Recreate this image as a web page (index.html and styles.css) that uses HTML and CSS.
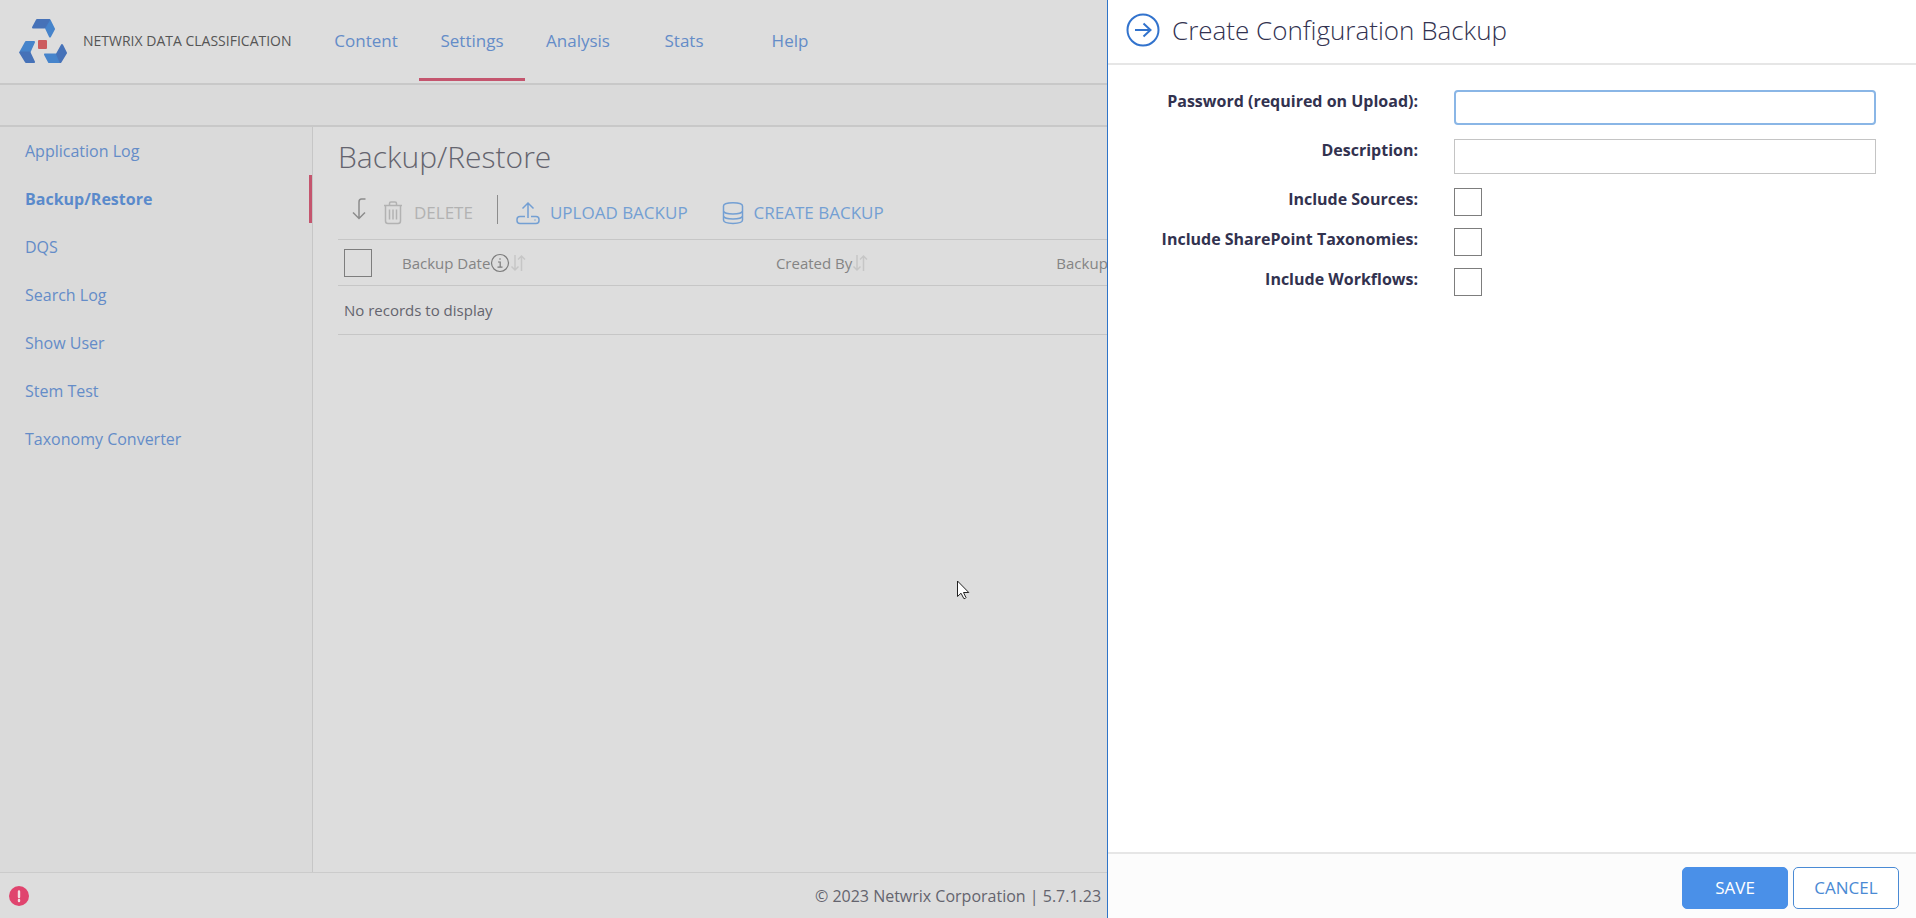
FILE: index.html
```html
<!DOCTYPE html>
<html lang="en">
<head>
<meta charset="utf-8">
<title>Netwrix Data Classification - Backup/Restore</title>
<link rel="stylesheet" href="styles.css">
</head>
<body>
<div class="app">
  <header class="topbar">
    <a class="brand" href="#">
      <svg class="brand-logo" viewBox="0 0 48 44" width="48" height="44" aria-hidden="true">
        <g stroke-linejoin="round" stroke-width="2">
          <path fill="#4684cb" stroke="#4684cb" d="M30.500 1L35 10l-4 7.500L26.500 8z"/>
          <path fill="#4672b8" stroke="#4672b8" d="M18 1h12l-4.500 7.500H14z"/>
          <path fill="#4684cb" stroke="#4684cb" d="M7 23h8l-4.500 10H1.500z"/>
          <path fill="#4672b8" stroke="#4672b8" d="M1.200 33.500h9.300L15 43H7z"/>
          <path fill="#4684cb" stroke="#4684cb" d="M26 35.500h11L41 43H30z"/>
          <path fill="#4672b8" stroke="#4672b8" d="M43 26l4 8-5.500 9-3.500-8z"/>
          <path fill="#cc5c5e" stroke="#cc5c5e" d="M20 22h7v7h-7z"/>
        </g>
      </svg>
      <span>NETWRIX DATA CLASSIFICATION</span>
    </a>
    <nav class="main-nav">
      <a href="#">Content</a>
      <a class="current" href="#">Settings</a>
      <a href="#">Analysis</a>
      <a href="#">Stats</a>
      <a href="#">Help</a>
    </nav>
  </header>
  <div class="subbar"></div>
  <div class="body">
    <nav class="sidebar">
      <a href="#">Application Log</a>
      <a class="current" href="#">Backup/Restore</a>
      <a href="#">DQS</a>
      <a href="#">Search Log</a>
      <a href="#">Show User</a>
      <a href="#">Stem Test</a>
      <a href="#">Taxonomy Converter</a>
    </nav>
    <main class="content">
      <h1>Backup/Restore</h1>
      <div class="toolbar">
        <svg class="apply-arrow" viewBox="0 0 14 22" width="14" height="22" aria-hidden="true"><path d="M13.500 1H9.500Q7 1 7 4v16M1 14.500l6 6 6-6"/></svg>
        <button class="tool" type="button" disabled>
          <svg viewBox="0 0 22 24" width="22" height="24" aria-hidden="true"><path d="M2 4.500h18M7.500 4V2.500q0-1.500 1.500-1.500h4q1.500 0 1.500 1.500V4M3.500 4.500V20q0 2.500 2.500 2.500h10q2.500 0 2.500-2.500V4.500M7.500 8.500v10M11 8.500v10M14.500 8.500v10"/></svg>
          <span>DELETE</span>
        </button>
        <span class="divider"></span>
        <button class="tool upload" type="button">
          <svg viewBox="0 0 24 24" width="24" height="24" aria-hidden="true"><path d="M12 17V2M6.500 7.500L12 2l5.500 5.500M9 15.500H4q-3 0-3 3v1q0 3 3 3h16q3 0 3-3v-1q0-3-3-3h-5M18.500 19h1"/></svg>
          <span>UPLOAD BACKUP</span>
        </button>
        <button class="tool" type="button">
          <svg viewBox="0 0 22 24" width="22" height="24" aria-hidden="true"><path d="M1.500 5c0-4.500 19-4.500 19 0v14c0 4.500-19 4.500-19 0zM1.500 10c1 4 18 4 19 0M1.500 15c1 4 18 4 19 0"/></svg>
          <span>CREATE BACKUP</span>
        </button>
      </div>
      <table class="grid">
        <colgroup><col class="col-pick"><col class="col-date"><col class="col-user"><col></colgroup>
        <thead>
          <tr>
            <th><input class="tick" type="checkbox" aria-label="Select all backups"></th>
            <th><span class="head">Backup Date
              <svg class="info" viewBox="0 0 20 20" width="20" height="20" aria-hidden="true"><circle cx="10" cy="10" r="8.500"/><path d="M8 9h2.200v5M7.500 14.200h5M10 5.200v1.600"/></svg>
              <svg class="sort" viewBox="0 0 16 18" width="16" height="18" aria-hidden="true"><path d="M5 1v15M1.500 12.500L5 16l3.500-3.500M11.500 17V2M8 5.500L11.500 2 15 5.500"/></svg></span></th>
            <th><span class="head">Created By
              <svg class="sort" viewBox="0 0 16 18" width="16" height="18" aria-hidden="true"><path d="M5 1v15M1.500 12.500L5 16l3.500-3.500M11.500 17V2M8 5.500L11.500 2 15 5.500"/></svg></span></th>
            <th>Backup</th>
          </tr>
        </thead>
        <tbody><tr><td colspan="4">No records to display</td></tr></tbody>
      </table>
    </main>
  </div>
  <footer class="footer">
    <button class="alert" type="button" aria-label="Alerts">
      <svg viewBox="0 0 20 20" width="20" height="20" aria-hidden="true"><circle cx="10" cy="10" r="10" fill="#e0446e"/><path d="M10 5.500v5.500M10 14v1" stroke="#f3dde3" stroke-width="2.400" stroke-linecap="round"/></svg>
    </button>
    <p>© 2023 Netwrix Corporation | 5.7.1.23</p>
  </footer>
</div>

<section class="drawer" role="dialog" aria-labelledby="drawer-title">
  <header class="drawer-head">
    <button class="close" type="button" aria-label="Close panel">
      <svg viewBox="0 0 34 34" width="34" height="34" aria-hidden="true"><circle cx="17" cy="17" r="15.500"/><path d="M9 17h15.500M17.500 10.500L24.500 17l-7 6.500"/></svg>
    </button>
    <h2 id="drawer-title">Create Configuration Backup</h2>
  </header>
  <form class="drawer-form" id="backup-form">
    <div class="field"><label for="password">Password (required on Upload):</label><input class="box focused" id="password" type="password"></div>
    <div class="field"><label for="description">Description:</label><input class="box" id="description" type="text"></div>
    <div class="field"><label for="sources">Include Sources:</label><input class="tick" id="sources" type="checkbox"></div>
    <div class="field"><label for="taxonomies">Include SharePoint Taxonomies:</label><input class="tick" id="taxonomies" type="checkbox"></div>
    <div class="field"><label for="workflows">Include Workflows:</label><input class="tick" id="workflows" type="checkbox"></div>
  </form>
  <footer class="drawer-foot">
    <button class="btn primary" type="submit" form="backup-form">SAVE</button>
    <button class="btn" type="button">CANCEL</button>
  </footer>
</section>

<svg class="pointer" viewBox="0 0 13 20" width="13" height="20" aria-hidden="true"><path d="M.5 1v15.500l3.500-3.300 2.800 5.300q1.500.6 2.200-.8L6.500 12.500h5.300z" fill="#fff" stroke="#222" stroke-width="1"/></svg>
</body>
</html>
```
FILE: styles.css
```css
* { box-sizing: border-box; }

body {
  margin: 0;
  font-family: "Open Sans", "Noto Sans", sans-serif;
  font-size: 16px;
  line-height: 24px;
  color: #64646e;
  background: #ddd;
}

a { color: #648cc8; text-decoration: none; }
h1, h2, p { margin: 0; }
button { font: inherit; cursor: pointer; }
svg { flex: none; fill: none; }

.app { display: flex; flex-direction: column; min-height: 100vh; }

/* Top bar */
.topbar { display: flex; height: 85px; border-bottom: 2px solid #c8c8c8; }
.brand {
  display: flex;
  align-items: center;
  gap: 16px;
  width: 313px;
  padding: 0 0 2px 19px;
  color: #555;
  font-size: 14px;
  white-space: nowrap;
}
.main-nav { display: flex; }
.main-nav a {
  width: 106px;
  height: 81px;
  padding-top: 29px;
  font-size: 17px;
  text-align: center;
  border-bottom: 3px solid transparent;
}
.main-nav .current { border-color: #c4556e; }
.subbar { height: 42px; background: #dadada; border-bottom: 2px solid #c8c8c8; }

/* Page body */
.body { display: flex; flex: 1; }
.sidebar {
  flex: none;
  width: 313px;
  background: #dadada;
  border-right: 1px solid #c6c6c6;
}
.sidebar a {
  display: block;
  height: 48px;
  padding: 12px 0 0 25px;
}
.sidebar .current { font-weight: 700; border-right: 3px solid #c4556e; color: #5a8acb; }
.content { flex: 1; padding: 10px 20px 0 25px; }
.content h1 { font-size: 30px; font-weight: 300; line-height: 40px; }

.toolbar { display: flex; align-items: center; height: 62px; padding: 10px 0 0 14px; }
.apply-arrow { margin: 0 16px 8px 0; stroke: #8c8c8c; stroke-width: 1.5; }
.tool {
  display: flex;
  align-items: center;
  gap: 10px;
  padding: 0;
  margin-right: 34px;
  border: 0;
  background: none;
  color: #739fd3;
  font-size: 17px;
}
.tool svg { stroke: #739fd3; stroke-width: 1.5; }
.tool:disabled { color: #b2b2b2; margin-right: 24px; }
.tool:disabled svg { stroke: #b2b2b2; }
.divider { width: 1px; height: 29px; margin: 0 18px 8px 0; background: #8c8c8c; }

.grid { width: 100%; border-collapse: collapse; table-layout: fixed; }
.grid tr { border: 1px solid #c6c6c6; border-width: 1px 0; }
.grid th, .grid td { padding: 0 6px; font-size: 15px; text-align: left; }
.grid th { height: 46px; font-weight: 400; color: #848484; }
.grid td { height: 49px; }
.grid th .tick { display: block; background: none; }
.col-pick { width: 58px; }
.col-date { width: 24%; }
.col-user { width: 18%; }
.head { display: flex; align-items: center; }
.info { stroke: #7c7c7c; stroke-width: 1.2; }
.sort { stroke: #c6c6c6; stroke-width: 1.5; }

.tick {
  appearance: none;
  flex: none;
  width: 28px;
  height: 28px;
  margin: 0;
  border: 1px solid #7d7d7d;
  background: #fff;
}

.footer {
  display: grid;
  grid-template-columns: 1fr auto 1fr;
  align-items: center;
  height: 46px;
  padding: 0 9px;
  border-top: 1px solid #cbcbcb;
}
.alert { display: flex; justify-self: start; padding: 0; border: 0; background: none; }

/* Slide-in panel */
.drawer {
  position: fixed;
  inset: 0 0 0 auto;
  display: flex;
  flex-direction: column;
  width: 809px;
  background: #fff;
  border-left: 1px solid #2f74c8;
}
.drawer-head {
  display: flex;
  align-items: center;
  gap: 12px;
  height: 65px;
  padding: 0 18px 4px;
  border-bottom: 2px solid #e6e6e6;
}
.drawer-head h2 { color: #323250; font-size: 26px; font-weight: 300; line-height: 36px; }
.close { display: flex; padding: 0; border: 0; background: none; }
.close svg { stroke: #3273cd; stroke-width: 2; }

.drawer-form { flex: 1; padding: 25px 40px 0 0; }
.field { display: flex; gap: 36px; margin-bottom: 12px; }
.field label {
  flex: none;
  width: 310px;
  color: #32324f;
  font-weight: 700;
  line-height: 22px;
  text-align: right;
}
.box {
  flex: 1;
  height: 35px;
  margin: 0 0 2px;
  padding: 0 8px;
  border: 1px solid #c4c4c4;
  outline: 0;
  background: #fff;
  font: inherit;
}
.focused { border: 2px solid #8ab6e6; border-radius: 4px; }

.drawer-foot {
  display: flex;
  align-items: center;
  justify-content: flex-end;
  gap: 5px;
  height: 66px;
  padding: 4px 17px 0 0;
  background: #fcfcfc;
  border-top: 2px solid #e6e6e6;
}
.btn {
  width: 106px;
  height: 42px;
  padding: 0;
  border: 1px solid #4a8ad4;
  border-radius: 5px;
  background: #fff;
  color: #4a8ad4;
  font-size: 17px;
}
.primary { border-color: #4a90e8; background: #4a90e8; color: #fff; }

/* Mouse pointer lying over the page */
.pointer { position: fixed; left: 957px; top: 580px; }
```
